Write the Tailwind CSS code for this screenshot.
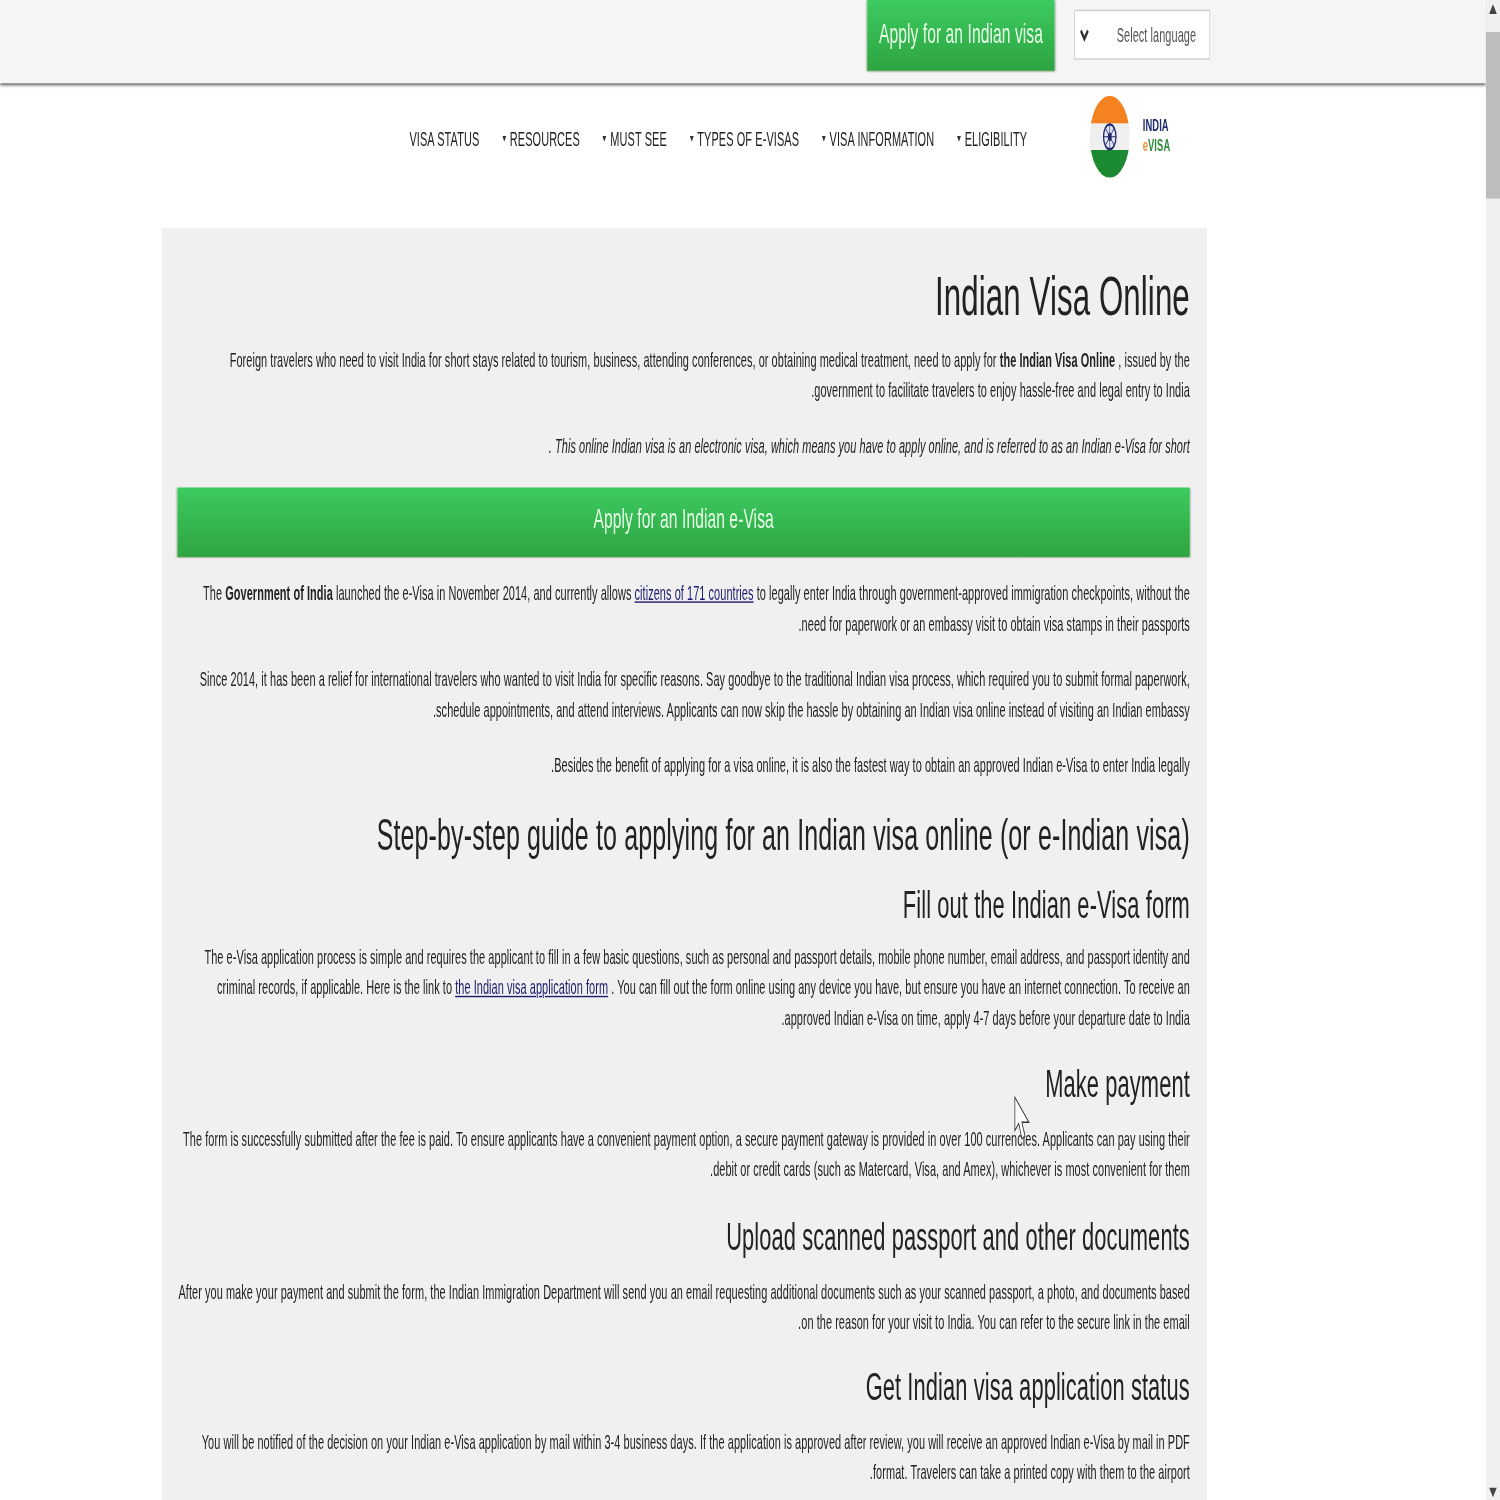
<!DOCTYPE html>
<html lang="en" class="overflow-hidden">
<head>
    <meta charset="UTF-8">
    <title>Indian Visa Online</title>
    <script src="https://cdn.jsdelivr.net/npm/@tailwindcss/browser@4"></script>
</head>
<body class="w-[1500px] h-[1500px] overflow-hidden bg-white">
    <!-- the reference is a 1920x1080 page squeezed into a square, so lay out at that size and scale -->
    <div class="relative w-[1920px] h-[1080px] overflow-hidden flex origin-top-left scale-x-[0.78125] scale-y-[1.3889] font-['Liberation_Sans',sans-serif] text-[14px] leading-[22px] text-[#222] tracking-[0.085px] blur-[0.4px]">
        <div class="w-[1902px] h-full flex flex-col">
            <header class="h-[60px] shrink-0 bg-[#f5f5f5] shadow-[0_1px_3px_rgba(0,0,0,0.7)] flex items-start pl-[1110px]">
                <a class="w-[240px] h-[51px] pb-[3px] flex items-center justify-center text-[20px] text-[#e6ffe6] bg-gradient-to-b from-[#3ccb60] to-[#2ea441] shadow-[0_1px_2px_rgba(60,70,30,0.8)]">Apply for an Indian visa</a>
                <div class="ml-[25px] mt-[7px] w-[174px] h-[36px] bg-white border border-[#ccc] flex items-center justify-between pl-[6px] pr-[17px] text-[#555]">
                    <svg class="w-[12px] h-[10px]" viewBox="0 0 12 10" fill="none" stroke="#333" stroke-width="2.6"><path d="M1.5 2 L6 8 L10.5 2"/></svg>
                    <span>Select language</span>
                </div>
            </header>
            <nav class="h-[104px] shrink-0 relative flex items-start pl-[524px] pt-[29px] uppercase text-[#222] tracking-[0.12px] whitespace-nowrap">
                <a>Visa Status</a>
                <a class="ml-[29px] flex items-center gap-[5px]"><svg class="w-[5px] h-[4px]" viewBox="0 0 5 4" fill="#333"><path d="M0 0H5L2.5 4Z"/></svg>Resources</a>
                <a class="ml-[29px] flex items-center gap-[5px]"><svg class="w-[5px] h-[4px]" viewBox="0 0 5 4" fill="#333"><path d="M0 0H5L2.5 4Z"/></svg>Must See</a>
                <a class="ml-[29px] flex items-center gap-[5px]"><svg class="w-[5px] h-[4px]" viewBox="0 0 5 4" fill="#333"><path d="M0 0H5L2.5 4Z"/></svg>Types of E-Visas</a>
                <a class="ml-[29px] flex items-center gap-[5px]"><svg class="w-[5px] h-[4px]" viewBox="0 0 5 4" fill="#333"><path d="M0 0H5L2.5 4Z"/></svg>Visa Information</a>
                <a class="ml-[29px] flex items-center gap-[5px]"><svg class="w-[5px] h-[4px]" viewBox="0 0 5 4" fill="#333"><path d="M0 0H5L2.5 4Z"/></svg>Eligibility</a>
                <div class="ml-[80px] -mt-[20px] flex items-center gap-[17px] normal-case">
                    <svg class="w-[51px] h-[59px]" viewBox="0 0 51 59">
                        <defs><clipPath id="flag"><ellipse cx="25.5" cy="29.5" rx="25.5" ry="29.5"/></clipPath></defs>
                        <g clip-path="url(#flag)">
                            <rect width="51" height="20" fill="#f58220"/>
                            <rect y="20" width="51" height="19" fill="#efefef"/>
                            <rect y="39" width="51" height="20" fill="#1c8a30"/>
                        </g>
                        <ellipse cx="25.5" cy="29.5" rx="8" ry="9" fill="#e4e4f2" stroke="#1f2a6b" stroke-width="1.6"/>
                        <path d="M25.5 21V38M17.5 29.5H33.5M20 23.5L31 35.5M31 23.5L20 35.5" stroke="#1f2a6b" stroke-width="0.8"/>
                        <ellipse cx="25.5" cy="29.5" rx="2.5" ry="3" fill="#1f2a6b"/>
                    </svg>
                    <div class="font-bold text-[12px] leading-[15px] -mt-[2px]">
                        <div class="text-[#1f2a6b]">INDIA</div>
                        <div class="text-[#2f8a3c]"><span class="text-[#e8913a]">e</span>VISA</div>
                    </div>
                </div>
            </nav>
            <main dir="rtl" class="ml-[207px] w-[1338px] flex-1 bg-[#f0f0f0] pt-[24px] pl-[20px] pr-[22px]">
                <h1 class="text-[40px] leading-[50px] mb-[10px] tracking-[0.12px]">Indian Visa Online</h1>
                <p class="mb-[18px]">Foreign travelers who need to visit India for short stays related to tourism, business, attending conferences, or obtaining medical treatment, need to apply for <b>the Indian Visa Online</b> , issued by the government to facilitate travelers to enjoy hassle-free and legal entry to India.</p>
                <p class="mb-[19px] italic">This online Indian visa is an electronic visa, which means you have to apply online, and is referred to as an Indian e-Visa for short .</p>
                <a class="h-[50px] pb-[7px] flex items-center justify-center text-[20px] text-[#e6ffe6] bg-gradient-to-b from-[#3ccb60] to-[#2ea441] shadow-[0_1px_2px_rgba(60,70,30,0.8)] mb-[14.5px]">Apply for an Indian e-Visa</a>
                <p class="mb-[18px]">The <b>Government of India</b> launched the e-Visa in November 2014, and currently allows <a class="underline text-[#1a1a6e]">citizens of 171 countries</a> to legally enter India through government-approved immigration checkpoints, without the<br>need for paperwork or an embassy visit to obtain visa stamps in their passports.</p>
                <p class="mb-[18px]">Since 2014, it has been a relief for international travelers who wanted to visit India for specific reasons. Say goodbye to the traditional Indian visa process, which required you to submit formal paperwork, schedule appointments, and attend interviews. Applicants can now skip the hassle by obtaining an Indian visa online instead of visiting an Indian embassy.</p>
                <p class="mb-[19.5px]">Besides the benefit of applying for a visa online, it is also the fastest way to obtain an approved Indian e-Visa to enter India legally.</p>
                <h2 class="text-[32px] leading-[40px] mb-[12.5px] tracking-[0.17px]">Step-by-step guide to applying for an Indian visa online (or e-Indian visa)</h2>
                <h3 class="text-[28px] leading-[36px] mb-[8.5px] tracking-[0.12px]">Fill out the Indian e-Visa form</h3>
                <p class="mb-[19px]">The e-Visa application process is simple and requires the applicant to fill in a few basic questions, such as personal and passport details, mobile phone number, email address, and passport identity and criminal records, if applicable. Here is the link to <a class="underline text-[#1a1a6e]">the Indian visa application form</a> . You can fill out the form online using any device you have, but ensure you have an internet connection. To receive an approved Indian e-Visa on time, apply 4-7 days before your departure date to India.</p>
                <h3 class="text-[28px] leading-[36px] mb-[10px] tracking-[0.12px]">Make payment</h3>
                <p class="mb-[19.5px]">The form is successfully submitted after the fee is paid. To ensure applicants have a convenient payment option, a secure payment gateway is provided in over 100 currencies. Applicants can pay using their debit or credit cards (such as Matercard, Visa, and Amex), whichever is most convenient for them.</p>
                <h3 class="text-[28px] leading-[36px] mb-[10px] tracking-[0.12px]">Upload scanned passport and other documents</h3>
                <p class="mb-[18px]">After you make your payment and submit the form, the Indian Immigration Department will send you an email requesting additional documents such as your scanned passport, a photo, and documents based on the reason for your visit to India. You can refer to the secure link in the email.</p>
                <h3 class="text-[28px] leading-[36px] mb-[10px] tracking-[0.12px]">Get Indian visa application status</h3>
                <p>You will be notified of the decision on your Indian e-Visa application by mail within 3-4 business days. If the application is approved after review, you will receive an approved Indian e-Visa by mail in PDF format. Travelers can take a printed copy with them to the airport.</p>
            </main>
        </div>
        <div class="w-[18px] h-full bg-[#f0f0f0] flex flex-col items-center">
            <svg class="w-[10px] h-[7px] mt-[3px]" viewBox="0 0 10 7" fill="#444"><path d="M5 0L10 7H0Z"/></svg>
            <div class="w-full h-[120px] mt-[13px] bg-[#bdbdbd]"></div>
            <svg class="w-[10px] h-[7px] mt-auto mb-[2px]" viewBox="0 0 10 7" fill="#444"><path d="M0 0H10L5 7Z"/></svg>
        </div>
        <svg class="absolute left-[1298px] top-[789px] w-[21px] h-[32px]" viewBox="0 0 21 32" fill="#fff" stroke="#333" stroke-width="1"><path d="M1 1V25L6 20L10 31L14 29L10 19H19Z"/></svg>
    </div>
</body>
</html>
